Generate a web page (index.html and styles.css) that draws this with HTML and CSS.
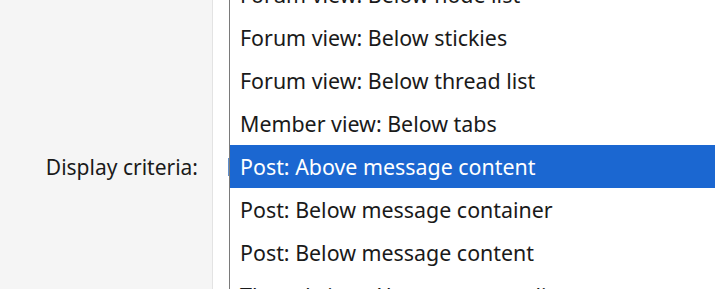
FILE: index.html
```html
<!DOCTYPE html>
<html lang="en">
<head>
<meta charset="utf-8">
<title>Display criteria</title>
<link rel="stylesheet" href="styles.css">
</head>
<body>
<div class="form-row">
  <div class="label-col">
    <label class="label" for="crit">Display criteria:</label>
  </div>
  <div class="field-col">
    <div class="select-edge"></div>
    <ul class="listbox" id="crit" role="listbox">
      <li class="option">Forum view: Below node list</li>
      <li class="option">Forum view: Below stickies</li>
      <li class="option">Forum view: Below thread list</li>
      <li class="option">Member view: Below tabs</li>
      <li class="option selected">Post: Above message content</li>
      <li class="option">Post: Below message container</li>
      <li class="option">Post: Below message content</li>
      <li class="option">Thread view: Above message list</li>
    </ul>
  </div>
</div>
</body>
</html>
```
FILE: styles.css
```css
html, body {
  margin: 0;
  padding: 0;
  height: 100%;
  overflow: hidden;
  background: #ffffff;
  font-family: "Noto Sans", "Open Sans", sans-serif;
  color: #1a1a1a;
}

.form-row {
  display: flex;
  height: 289px;
}

.label-col {
  width: 213px;
  flex: none;
  background: #f5f5f5;
  border-right: 1px solid #e3e3e3;
  display: flex;
  justify-content: flex-end;
  padding-top: 151px;
  padding-right: 14px;
  box-sizing: border-box;
}

.label {
  font-size: 21px;
  line-height: 32px;
  height: 32px;
}

.field-col {
  flex: 1;
  position: relative;
}

.select-edge {
  position: absolute;
  left: 15px;
  top: 158px;
  width: 2px;
  height: 18px;
  background: #5f8fce;
}

.listbox {
  position: absolute;
  top: -28px;
  left: 16px;
  right: -2px;
  margin: 0;
  padding: 0;
  list-style: none;
  background: #ffffff;
  border: 1px solid #7a7a7a;
}

.option {
  height: 43px;
  line-height: 43px;
  padding-left: 10px;
  font-size: 21.4px;
  white-space: nowrap;
}

.option.selected {
  background: #1b67d1;
  color: #ffffff;
}
```
